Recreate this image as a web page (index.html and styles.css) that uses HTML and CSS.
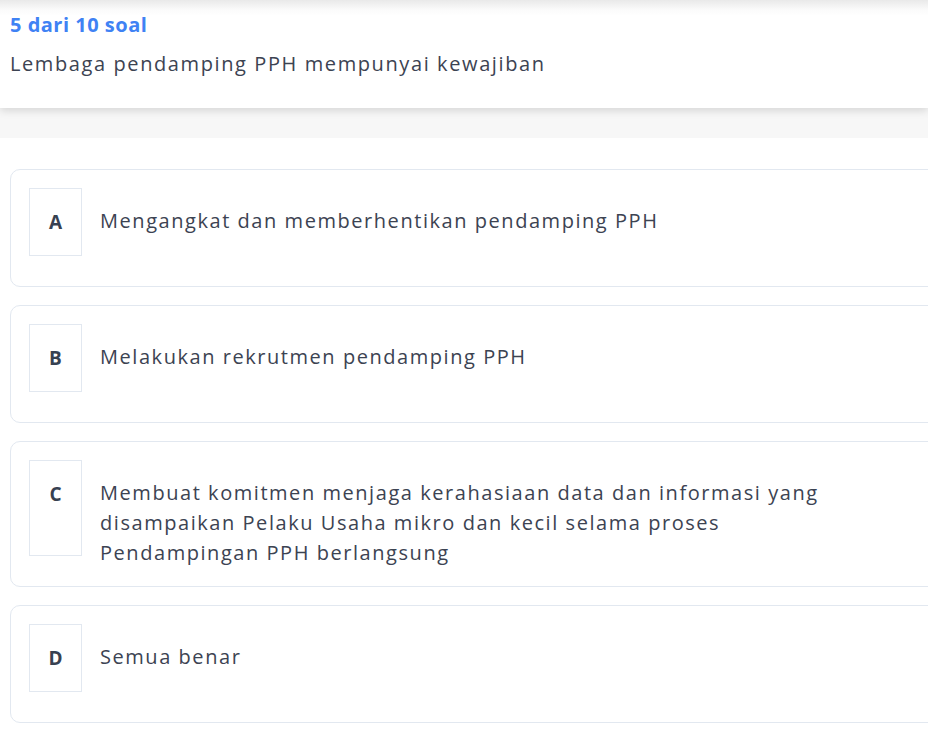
FILE: index.html
```html
<!DOCTYPE html>
<html lang="id">
<head>
<meta charset="utf-8">
<title>Soal</title>
<link rel="stylesheet" href="styles.css">
</head>
<body>
  <header class="head">
    <div class="counter">5 dari 10 soal</div>
    <div class="question">Lembaga pendamping PPH mempunyai kewajiban</div>
  </header>
  <div class="band"></div>
  <main class="options">
    <div class="option">
      <div class="letter">A</div>
      <div class="text">Mengangkat dan memberhentikan pendamping PPH</div>
    </div>
    <div class="option">
      <div class="letter">B</div>
      <div class="text">Melakukan rekrutmen pendamping PPH</div>
    </div>
    <div class="option">
      <div class="letter">C</div>
      <div class="text">Membuat komitmen menjaga kerahasiaan data dan informasi yang disampaikan Pelaku Usaha mikro dan kecil selama proses Pendampingan PPH berlangsung</div>
    </div>
    <div class="option">
      <div class="letter">D</div>
      <div class="text">Semua benar</div>
    </div>
  </main>
</body>
</html>
```
FILE: styles.css
```css
html, body {
  margin: 0;
  padding: 0;
  overflow: hidden;
  background: #ffffff;
}
body {
  font-family: "Open Sans", "DejaVu Sans", sans-serif;
  color: #374151;
  width: 928px;
}
.head {
  position: relative;
  z-index: 1;
  height: 108px;
  box-sizing: border-box;
  padding: 11px 10px 0;
  background: linear-gradient(#e9e9e9 0, #fbfbfb 10px, #ffffff 16px);
  box-shadow: 0 3px 8px rgba(0, 0, 0, 0.13);
}
.counter {
  font-size: 20px;
  font-weight: 700;
  letter-spacing: 0.5px;
  line-height: 28px;
  color: #3f82f4;
}
.question {
  margin-top: 11px;
  font-size: 20px;
  letter-spacing: 1.6px;
  line-height: 28px;
  color: #3c4352;
}
.band {
  height: 30px;
  background: #f7f7f7;
}
.options {
  display: flex;
  flex-direction: column;
  gap: 18px;
  padding: 31px 0 40px 10px;
}
.option {
  width: 1000px;
  display: flex;
  align-items: stretch;
  gap: 18px;
  padding: 18px 18px 30px;
  border: 1px solid #e2e8f0;
  border-radius: 10px;
  background: #fff;
}
.letter {
  flex: none;
  width: 53px;
  box-sizing: border-box;
  padding: 18px 0;
  border: 1px solid #e2e8f0;
  text-align: center;
  font-size: 19px;
  font-weight: 700;
  line-height: 30px;
  color: #374151;
}
.text {
  margin: 18px 0 -12px;
  max-width: 730px;
  font-size: 20px;
  letter-spacing: 1.55px;
  line-height: 30px;
  color: #3c4352;
}
```
